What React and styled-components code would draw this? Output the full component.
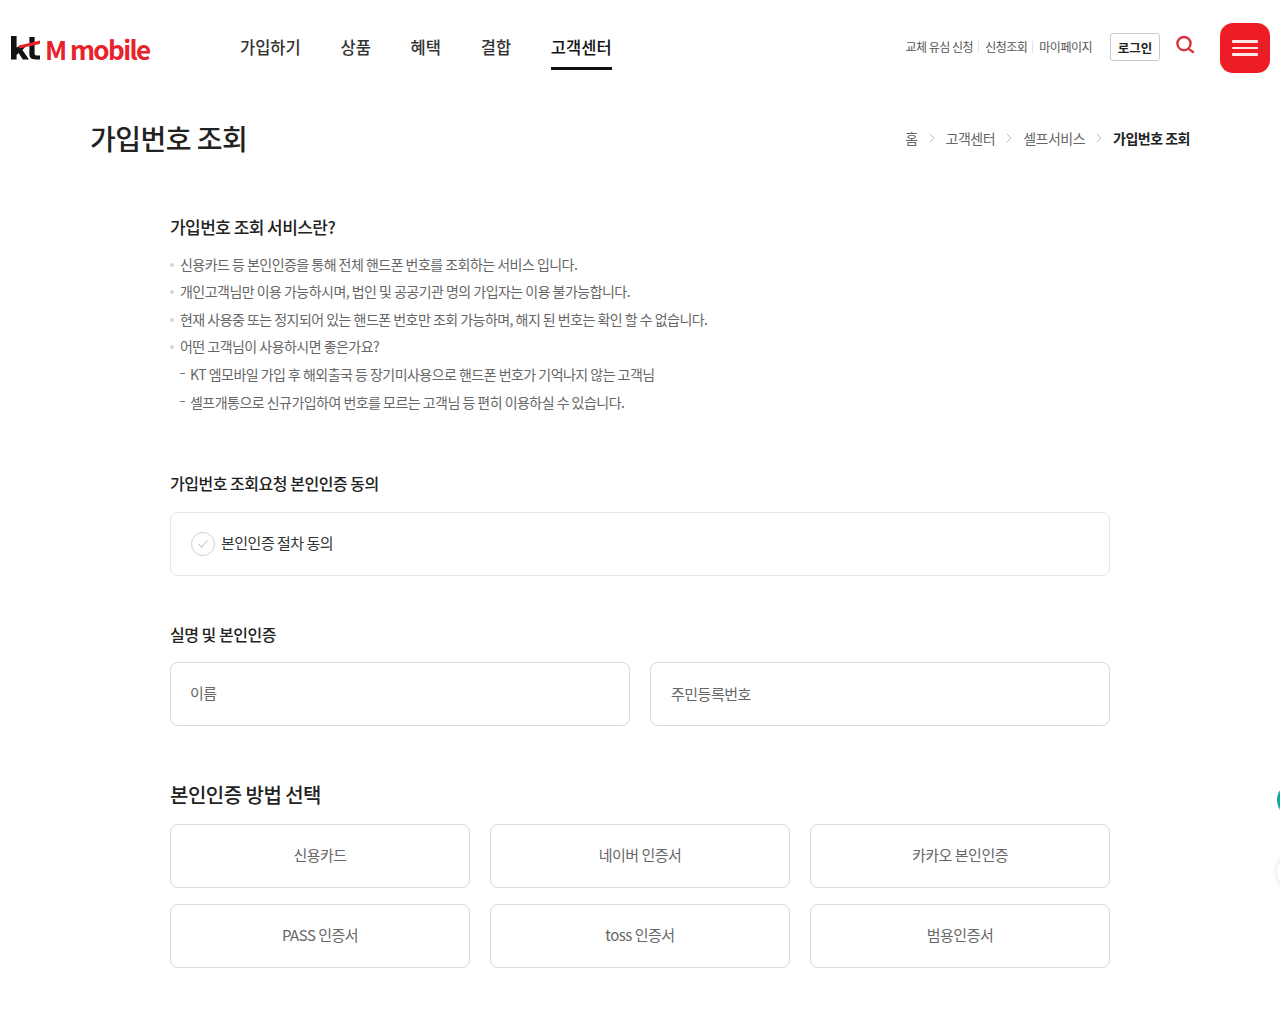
import React from "react";
import styled, { createGlobalStyle } from "styled-components";

const Global = createGlobalStyle`
  html, body { margin: 0; padding: 0; background: #fff; }
  body { font-family: "Noto Sans CJK KR", "Noto Sans", sans-serif; color: #222; overflow: hidden; height: 1024px; }
  * { box-sizing: border-box; }
`;

const Page = styled.div`
  position: relative;
  width: 1280px;
  height: 1024px;
  overflow: hidden;
`;

const Header = styled.header`
  display: flex;
  align-items: flex-start;
  height: 95px;
  padding: 23px 10px 0 10px;
`;

const Logo = styled.a`
  display: flex;
  align-items: center;
  width: 230px;
  height: 50px;
  flex: none;
`;
const LogoMark = styled.svg`
  width: 30px;
  height: 24px;
  flex: none;
  margin: 0 0 0 1px;
`;
const LogoText = styled.span`
  font-family: "Noto Sans CJK KR", sans-serif;
  font-size: 26px;
  font-weight: 700;
  color: #e8212b;
  letter-spacing: -1.6px;
  margin: 2px 0 0 4px;
  line-height: 30px;
  white-space: pre;
`;

const Nav = styled.nav`
  display: flex;
  gap: 39.75px;
  flex: 1;
`;
const NavItem = styled.a`
  position: relative;
  height: 47px;
  font-size: 16.5px;
  font-weight: 500;
  color: ${p => (p.$active ? "#111" : "#333")};
  line-height: 48px;
  white-space: nowrap;
  border-bottom: ${p => (p.$active ? "3px solid #111" : "none")};
`;

const Utils = styled.div`
  display: flex;
  align-items: center;
  height: 50px;
`;
const UtilLink = styled.a`
  font-size: 12px;
  color: #555;
  letter-spacing: -0.5px;
  line-height: 12px;
  padding: 0 5px 0 6px;
  white-space: nowrap;
  border-right: ${p => (p.$last ? "none" : "1px solid #e2e2e2")};
  margin-top: -2px;
`;
const LoginBtn = styled.button`
  width: 50px;
  height: 28px;
  margin-left: 13px;
  margin-top: -2px;
  padding: 0;
  font-family: inherit;
  font-size: 12.5px;
  font-weight: 700;
  color: #222;
  background: #fff;
  border: 1px solid #c9c9c9;
  border-radius: 3px;
`;
const SearchIcon = styled.svg`
  width: 20px;
  height: 20px;
  margin-left: 15px;
  margin-top: -6px;
`;
const MenuBtn = styled.button`
  display: flex;
  flex-direction: column;
  justify-content: center;
  align-items: center;
  gap: 4px;
  width: 50px;
  height: 50px;
  margin-left: 25px;
  padding: 0;
  border: none;
  border-radius: 13px;
  background: #ee1c25;
`;
const MenuLine = styled.span`
  display: block;
  width: 26px;
  height: 2.5px;
  background: #fde8e8;
  border-radius: 1px;
`;

const TitleRow = styled.div`
  display: flex;
  justify-content: space-between;
  align-items: center;
  height: 86px;
  padding: 0 90px;
`;
const PageTitle = styled.h1`
  margin: 0;
  font-size: 28px;
  font-weight: 500;
  color: #222;
  letter-spacing: -0.5px;
`;
const Crumbs = styled.div`
  display: flex;
  align-items: center;
  font-size: 14px;
  color: #666;
  letter-spacing: -0.5px;
`;
const Crumb = styled.span`
  font-weight: ${p => (p.$current ? 700 : 400)};
  color: ${p => (p.$current ? "#222" : "#666")};
`;
const CrumbSep = styled.svg`
  width: 6px;
  height: 10px;
  margin: 0 11px;
`;

const Content = styled.main`
  padding: 0 170px;
`;
const SectionTitle = styled.h2`
  margin: 0;
  font-size: 16px;
  font-weight: 500;
  line-height: 24px;
  color: #222;
  letter-spacing: -0.48px;
`;
const IntroTitle = styled(SectionTitle)`
  font-size: 17px;
  letter-spacing: -0.55px;
`;
const MethodTitle = styled(SectionTitle)`
  font-size: 20px;
  letter-spacing: -0.52px;
`;
const Intro = styled.section`
  padding-top: 34px;
`;
const InfoList = styled.ul`
  list-style: none;
  margin: 11.6px 0 0;
  padding: 0;
`;
const InfoItem = styled.li`
  position: relative;
  height: 27.6px;
  line-height: 27.6px;
  padding-left: ${p => (p.$dash ? "20px" : "10px")};
  font-size: 14px;
  color: #666;
  letter-spacing: -0.53px;
  white-space: nowrap;
  &::before {
    content: "";
    position: absolute;
    left: ${p => (p.$dash ? "10px" : "0")};
    top: 12px;
    width: ${p => (p.$dash ? "5px" : "4px")};
    height: ${p => (p.$dash ? "1px" : "4px")};
    border-radius: ${p => (p.$dash ? "0" : "50%")};
    background: ${p => (p.$dash ? "#777" : "#d5d5d5")};
  }
`;

const Card = styled.div`
  display: flex;
  align-items: center;
  height: 64px;
  padding: 0 20px;
  border: 1px solid #e6e6e6;
  border-radius: 8px;
  background: #fff;
`;
const Check = styled.span`
  display: flex;
  align-items: center;
  justify-content: center;
  width: 24px;
  height: 24px;
  border: 1px solid #cfcfcf;
  border-radius: 50%;
  margin-right: 6px;
`;
const CheckLabel = styled.span`
  font-size: 15px;
  color: #333;
  letter-spacing: -0.5px;
  margin-top: -2px;
`;
const Consent = styled.section`
  margin-top: 54.4px;
`;
const ConsentCard = styled(Card)`
  margin-top: 17px;
`;
const Identity = styled.section`
  margin-top: 46px;
`;
const InputGrid = styled.div`
  display: grid;
  grid-template-columns: 1fr 1fr;
  gap: 20px;
  margin-top: 16px;
`;
const Field = styled(Card)`
  border-color: #d9d9d9;
  font-size: 15px;
  color: #666;
  letter-spacing: -0.5px;
  padding-left: ${p => (p.$tight ? "19px" : "20px")};
  padding-bottom: ${p => (p.$tight ? "2px" : "0")};
`;
const Method = styled.section`
  margin-top: 57px;
`;
const MethodGrid = styled.div`
  display: grid;
  grid-template-columns: repeat(3, 1fr);
  gap: 16px 20px;
  margin-top: 17px;
`;
const MethodBtn = styled(Card)`
  justify-content: center;
  border-color: #d9d9d9;
  font-size: 15px;
  color: #666;
  letter-spacing: -0.5px;
  padding-bottom: 2px;
`;

const FloatTop = styled.div`
  position: absolute;
  left: 1277px;
  top: 783px;
  width: 34px;
  height: 34px;
  border-radius: 50%;
  background: #12a79d;
`;
const FloatBottom = styled.div`
  position: absolute;
  left: 1277px;
  top: 850px;
  width: 44px;
  height: 44px;
  border-radius: 50%;
  background: #fff;
  box-shadow: 0 0 5px rgba(0, 0, 0, 0.14);
`;

const Sep = () => (
  <CrumbSep viewBox="0 0 6 10">
    <path d="M.8.8 5 5 .8 9.2" fill="none" stroke="#bbb" strokeWidth="1" />
  </CrumbSep>
);

const info = [
  ["신용카드 등 본인인증을 통해 전체 핸드폰 번호를 조회하는 서비스 입니다."],
  ["개인고객님만 이용 가능하시며, 법인 및 공공기관 명의 가입자는 이용 불가능합니다."],
  ["현재 사용중 또는 정지되어 있는 핸드폰 번호만 조회 가능하며, 해지 된 번호는 확인 할 수 없습니다."],
  ["어떤 고객님이 사용하시면 좋은가요?"],
  ["KT 엠모바일 가입 후 해외출국 등 장기미사용으로 핸드폰 번호가 기억나지 않는 고객님", true],
  ["셀프개통으로 신규가입하여 번호를 모르는 고객님 등 편히 이용하실 수 있습니다.", true],
];

const methods = ["신용카드", "네이버 인증서", "카카오 본인인증", "PASS 인증서", "toss 인증서", "범용인증서"];

export default function App() {
  return (
    <Page>
      <Global />
      <Header>
        <Logo>
          <LogoMark viewBox="0 0 30 24">
            <path fill="#111" d="M0 0h5.6v11.5L10 9h6l-4.6 5 6.6 9.5H11.8L7.6 17l-2 1.9v4.6H0z" />
            <path fill="#111" d="M18.4 1h5.2v16.6c0 1.4.7 1.9 2 1.9H29v4h-4.6c-4 0-6-1.7-6-5.2z" />
            <path fill="#e8212b" d="M8 9.5 29 4.5v3.4L8 12.5z" />
          </LogoMark>
          <LogoText>M mobile</LogoText>
        </Logo>
        <Nav>
          <NavItem>가입하기</NavItem>
          <NavItem>상품</NavItem>
          <NavItem>혜택</NavItem>
          <NavItem>결합</NavItem>
          <NavItem $active>고객센터</NavItem>
        </Nav>
        <Utils>
          <UtilLink>교체 유심 신청</UtilLink>
          <UtilLink>신청조회</UtilLink>
          <UtilLink $last>마이페이지</UtilLink>
          <LoginBtn>로그인</LoginBtn>
          <SearchIcon viewBox="0 0 20 20">
            <circle cx="9" cy="8.6" r="6.6" fill="none" stroke="#d8353b" strokeWidth="2.4" />
            <path d="M13.4 13.6 18 17" fill="none" stroke="#d8353b" strokeWidth="2.4" strokeLinecap="round" />
          </SearchIcon>
          <MenuBtn>
            <MenuLine />
            <MenuLine />
            <MenuLine />
          </MenuBtn>
        </Utils>
      </Header>
      <TitleRow>
        <PageTitle>가입번호 조회</PageTitle>
        <Crumbs>
          <Crumb>홈</Crumb>
          <Sep />
          <Crumb>고객센터</Crumb>
          <Sep />
          <Crumb>셀프서비스</Crumb>
          <Sep />
          <Crumb $current>가입번호 조회</Crumb>
        </Crumbs>
      </TitleRow>
      <Content>
        <Intro>
          <IntroTitle>가입번호 조회 서비스란?</IntroTitle>
          <InfoList>
            {info.map(([t, dash]) => (
              <InfoItem key={t} $dash={dash}>{t}</InfoItem>
            ))}
          </InfoList>
        </Intro>
        <Consent>
          <SectionTitle>가입번호 조회요청 본인인증 동의</SectionTitle>
          <ConsentCard>
            <Check>
              <svg width="12" height="10" viewBox="0 0 12 10">
                <path d="M1.5 5.2 4.5 8 10.5 1.5" fill="none" stroke="#c4c4c4" strokeWidth="1.1" />
              </svg>
            </Check>
            <CheckLabel>본인인증 절차 동의</CheckLabel>
          </ConsentCard>
        </Consent>
        <Identity>
          <SectionTitle>실명 및 본인인증</SectionTitle>
          <InputGrid>
            <Field $tight>이름</Field>
            <Field>주민등록번호</Field>
          </InputGrid>
        </Identity>
        <Method>
          <MethodTitle>본인인증 방법 선택</MethodTitle>
          <MethodGrid>
            {methods.map(m => (
              <MethodBtn key={m}>{m}</MethodBtn>
            ))}
          </MethodGrid>
        </Method>
      </Content>
      <FloatTop />
      <FloatBottom />
    </Page>
  );
}
